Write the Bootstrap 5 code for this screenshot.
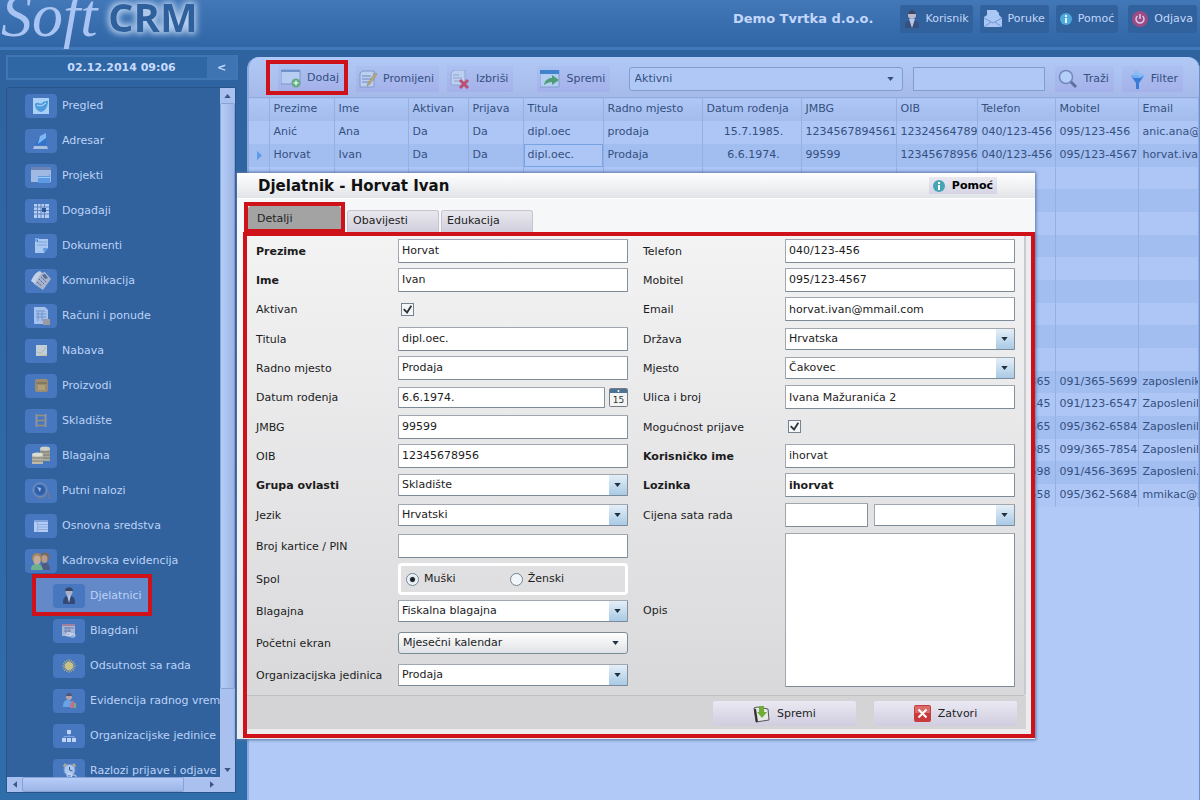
<!DOCTYPE html>
<html lang="hr">
<head>
<meta charset="utf-8">
<meta name="viewport" content="width=device-width, initial-scale=1">
<title>SoftCRM - Djelatnici</title>
<link href="https://cdn.jsdelivr.net/npm/bootstrap@5.3.0/dist/css/bootstrap.min.css" rel="stylesheet">
<style>
:root{--red:#cf1219;--ink:#34507f;--line:#8fabdb}
body{font-family:"DejaVu Sans",sans-serif;font-size:11px;line-height:14px;color:#1c1c1c;height:100vh;overflow:hidden;background:linear-gradient(#2e629f,#2f6eab)}
/* header */
.topbar{height:50px;background:linear-gradient(#4277b8,#3066a5);border-bottom:3px solid #4279ba}
.brand{display:block;overflow:visible}
.company{font-size:13px;color:#c3d7fb;margin-right:26px}
.top-btn{height:28px;background:#31629d;border:0;border-radius:3px;color:#c3d7fb;padding:0 4px;gap:6px;font-size:11px;margin-right:7px}
.top-btn:nth-last-child(2){margin-right:10px}
.top-btn:last-child{margin-right:3px}
/* sidebar */
.side{width:232px;margin-left:6px;padding:5px 0 7px;gap:7px}
.datebar{height:25px;border:2px solid #4076b4;background:#2f66a4;color:#c8dbfc}
.fold{width:29px;background:#3f74b3;border:0;color:#c8dbfc;font-weight:bold;font-size:11px}
.tree{background:#31629d;border:1px solid #28548a;border-radius:3px 0 0 0;margin-right:2px}
.tree li{height:35px;padding-left:18px}
.tree li.sub{padding-left:46px}
.tree a{color:#bcd2f9;text-decoration:none;gap:5px;white-space:nowrap}
.ico{width:32px;height:24px;border-radius:4px;background:#4677bf;display:flex;align-items:center;justify-content:center;flex:none}
.tree li.picked{position:relative}
.tree li.picked::before{content:"";position:absolute;left:25px;top:-4px;width:120px;height:42px;background:#6389c8;border:4px solid var(--red)}
.tree li.picked a{position:relative}
.sbar{background:#aac1f0}
.sbar-v{width:15px}
.sbar-h{height:15px}
.grip{background:linear-gradient(90deg,#b6cdf8,#9db5e6);border:1px solid #86a2d6;border-radius:2px}
.sbar-h .grip{background:linear-gradient(#b6cdf8,#9db5e6)}
.arr{width:15px;height:15px;display:flex;align-items:center;justify-content:center}
/* work area */
.work{margin:7px 0 0 9px;background:#b1c9f6;border-left:2px solid #8daadd;border-radius:12px 12px 0 0;border-right:1px solid #6b8fce}
.tools{height:40px;padding:4px 0 0 17px;background:linear-gradient(#b1c9f6,#a6bae9);border-radius:12px 12px 0 0}
.mark-red{border:4px solid var(--red);height:35px;margin-bottom:4px;padding-top:2px}
.tool{height:26px;border:0;background:linear-gradient(#abc0f0,#a5b1ea);color:var(--ink);padding:0 5px 0 3px;gap:6px;font-size:11px;display:flex;align-items:center;white-space:nowrap}
.tools .form-select,.tools .form-control{height:24px;border:1px solid #7f9dcd;background-color:#b0c8f6;color:var(--ink);font-size:11px;padding:0 5px;border-radius:3px}
.tools .form-control{border-radius:0;width:132px}
.tools .form-select{width:274px;background-image:url("data:image/svg+xml,%3Csvg xmlns='http://www.w3.org/2000/svg' viewBox='0 0 8 5'%3E%3Cpath d='M0 0h8L4 5z' fill='%2334507f'/%3E%3C/svg%3E");background-size:7px 4px;background-position:right 8px center}
.grid{table-layout:fixed;width:100%;color:var(--ink);border-top:1px solid var(--line)}
.grid th{font-weight:normal;height:23px;background:linear-gradient(#afc7f5,#a2bbec)}
.grid th,.grid td{padding:0 0 0 4px;border-right:1px solid #94afe0;white-space:nowrap;overflow:hidden}
.grid tbody tr{height:23px;background:#adc6f5}
.grid tbody tr:nth-child(3n){height:22px}
.grid tbody tr:nth-child(even){background:#a2bdf0}
.grid td.cell-on{box-shadow:inset 0 0 0 1px #76a3e4;background:#adc6f5}
/* dialog */
.dlg{position:absolute;left:237px;right:165px;top:173px;background:linear-gradient(#f7f8f9,#f4f4f5 40%,#ececee);box-shadow:0 0 3px 1px #5b76a4}
.dlg-head{height:26px;background:linear-gradient(#fff,#e1e4e7);border-bottom:1px solid #fff;padding-left:21px}
.dlg-head h1{font-size:15px;font-weight:bold;color:#111;line-height:20px}
.help{height:17px;border:0;background:linear-gradient(#eae9f0,#d6d3e4);font-weight:bold;font-size:11px;gap:7px;padding:0 4px;margin-right:38px}
.tabs{padding-left:7px;height:34px;margin-bottom:-1px;gap:2px}
.tabs button{width:92px;height:23px;border:1px solid #c6c5cf;border-bottom:0;border-radius:3px 3px 0 0;background:linear-gradient(#e9e8ee,#cfcddb);font-size:11px;text-align:left;padding:0 5px 3px;color:#222}
.tabs .tab-mark{width:101px;height:31px;border:4px solid var(--red)}
.tabs .tab-mark button{width:100%;height:23px;background:#a3a3a3;border:0;padding:2px 9px 0}
.frm{position:relative;border:4px solid var(--red);margin:-1px 0 1px 6px;padding-right:5px;padding-bottom:5px;background:#ececee}
.frm-body{background:linear-gradient(#f3f3f4,#d9d9db);border-right:2px solid #c9cacf;border-bottom:1px solid #bfc0c6;border-radius:0 0 3px 0;padding:0 9px 4px 9px;column-gap:15px}
.line{height:29px;display:grid;grid-template-columns:142px minmax(0,1fr);align-items:center}
.line:nth-child(3n){height:30px}
.line:nth-child(10){height:29px}
.line.first-wide{height:34px}
.line.wide{height:32px}
.line.opis{height:162px}
.line>label,.line>span{padding-top:2px}
.frm .form-control,.frm .form-select{height:24px;border:1px solid #a0a7af;border-right-color:#83919c;border-bottom-color:#7b8b97;border-radius:1px;padding:0 3px;font-size:11px;line-height:14px;color:#1c1c1c;background-color:#fff}
.frm .form-select{height:22px;background-image:url("data:image/svg+xml,%3Csvg xmlns='http://www.w3.org/2000/svg' viewBox='0 0 8 5'%3E%3Cpath d='M0 0h8L4 5z' fill='%2322313f'/%3E%3C/svg%3E"),linear-gradient(#e4eff8,#a9cae5);background-size:7px 4px,18px 100%;background-position:right 6px center,right center;background-repeat:no-repeat}
.frm .form-select.flat{border-radius:3px;padding-left:4px;border-color:#7b8b97;background-image:url("data:image/svg+xml,%3Csvg xmlns='http://www.w3.org/2000/svg' viewBox='0 0 8 5'%3E%3Cpath d='M0 0h8L4 5z' fill='%2322313f'/%3E%3C/svg%3E"),linear-gradient(#fff,#dfe2e5);background-size:7px 4px,100% 100%;background-position:right 8px center,center}
.frm textarea.form-control{height:154px;resize:none}
.frm .day{height:21px}
.cal{width:19px;height:20px;border:0;background:none;padding:0}
.frm .form-check-input{margin:0 0 0 3px;width:13px;height:13px;border:1px solid #76838f;border-radius:0;background-color:#f4f7f9}
.frm .form-check-input[type=checkbox]:checked{background-image:url("data:image/svg+xml,%3Csvg xmlns='http://www.w3.org/2000/svg' viewBox='0 0 13 13'%3E%3Cpath d='M2 6l4 4L11 2' fill='none' stroke='%23333' stroke-width='2.200'/%3E%3C/svg%3E");background-size:100%}
.frm .form-check-input[type=radio]{border-radius:50%;margin:0;background-color:#f1f6fa}
.frm .form-check-input[type=radio]:checked{background-image:radial-gradient(#222 0 2px,#d9e6f0 3px,#f1f6fa 5px)}
.radios{height:32px;border:3px solid #fff;border-radius:4px;padding-left:5px;gap:54px}
.radios label{gap:5px}
.rate{gap:6px}
.foot{background:#d4d4d6;height:33px;padding:5px 9px 0 0;gap:18px}
.act{width:143px;height:25px;border:0;border-radius:2px;background:linear-gradient(#eae9f2,#d0cde0);font-size:11px;gap:7px;color:#222}
</style>
</head>
<body class="d-flex flex-column">
<header class="topbar d-flex flex-none align-items-start">
  <a href="#" class="flex-shrink-0" aria-label="SoftCRM"><svg class="brand" width="200" height="47" viewBox="0 0 200 47">
    <defs><filter id="glow" x="-20%" y="-50%" width="140%" height="200%"><feMorphology operator="dilate" radius="2"/><feGaussianBlur stdDeviation="3"/><feComponentTransfer result="g"><feFuncR type="linear" slope="0" intercept=".46"/><feFuncG type="linear" slope="0" intercept=".62"/><feFuncB type="linear" slope="0" intercept=".86"/></feComponentTransfer><feMerge><feMergeNode in="g"/><feMergeNode in="SourceGraphic"/></feMerge></filter></defs>
    <text x="108" y="32" font-family="Open Sans,sans-serif" font-weight="bold" font-size="40" fill="#2f609e" filter="url(#glow)">CRM</text>
    <text x="1" y="36" font-family="Liberation Serif,serif" font-style="italic" font-size="62" fill="#a9c4f2">Soft</text>
  </svg></a>
  <div class="d-flex align-items-center ms-auto" style="padding-top:5px">
    <strong class="company">Demo Tvrtka d.o.o.</strong>
    <button class="top-btn d-flex align-items-center"><svg width="16" height="19" viewBox="0 0 16 19"><path d="M1 18c0-6 2-8 7-8s7 2 7 8z" fill="#3a4f7d"/><path d="M5 9l3 9 3-9z" fill="#b6c6e8"/><circle cx="8" cy="5" r="4" fill="#b8b9cf"/><path d="M4 4c0-5 8-5 8 0z" fill="#3a4665"/></svg>Korisnik</button>
    <button class="top-btn d-flex align-items-center"><svg width="18" height="18" viewBox="0 0 18 18"><path d="M0 7l3-2V0h9l3 3v2l3 3v9H0z" fill="#a9c6f4"/><path d="M0 8l9 5 9-5M0 17l7-5M18 17l-7-5" stroke="#6f95d2" fill="none"/></svg>Poruke</button>
    <button class="top-btn d-flex align-items-center"><svg width="12" height="12" viewBox="0 0 12 12"><circle cx="6" cy="6" r="6" fill="#4fa9dc"/><path d="M6 2v2M6 5v5" stroke="#e5f3ff" stroke-width="2"/></svg>Pomoć</button>
    <button class="top-btn d-flex align-items-center"><svg width="16" height="16" viewBox="0 0 16 16"><circle cx="8" cy="8" r="8" fill="#9c4a83"/><path d="M5.500 5a4 4 0 1 0 5 0M8 3v5" stroke="#d6cdec" stroke-width="1.500" fill="none"/></svg>Odjava</button>
  </div>
</header>

<main class="d-flex flex-grow-1" style="min-height:0">
  <aside class="side d-flex flex-column flex-shrink-0">
    <div class="datebar d-flex flex-shrink-0">
      <strong class="flex-grow-1 text-center align-self-center ps-4 ms-1">02.12.2014 09:06</strong>
      <button class="fold" aria-label="Sakrij izbornik">&lt;</button>
    </div>
    <nav class="tree d-flex flex-column flex-grow-1" style="min-height:0">
      <div class="d-flex flex-grow-1" style="min-height:0">
        <ul class="list-unstyled mb-0 flex-grow-1 overflow-hidden">
          <li class="d-flex align-items-center"><a href="#" class="d-flex align-items-center"><span class="ico"><svg width="16" height="16" viewBox="0 0 16 16"><path fill="#a9d0f6" d="M0 0h16v16H0z"/><path d="M2 6c3-3 5 1 7-1s4-2 6-2c0 6-3 10-7 11-4-1-6-4-6-8z" fill="#4d9bdc"/><path d="M4 7c4 2 6 0 9-2" stroke="#c7e6ff" fill="none"/></svg></span>Pregled</a></li>
          <li class="d-flex align-items-center"><a href="#" class="d-flex align-items-center"><span class="ico"><svg width="16" height="18" viewBox="0 0 16 18"><path d="M2 13L7 4l6-3v12z" fill="#2f74cf"/><path d="M7 4l6-3v5l-8 6z" fill="#7fb6f0"/><path d="M1 14h13l1 3H0z" fill="#a7bfe3"/></svg></span>Adresar</a></li>
          <li class="d-flex align-items-center"><a href="#" class="d-flex align-items-center"><span class="ico"><svg width="20" height="17" viewBox="0 0 20 17"><path d="M0 0h20v15H0z" fill="#9fb9e2"/><path d="M0 0h20v3H0z" fill="#6b83b4"/><path d="M7 9h11l1-2v9H7z" fill="#5d9ae4"/><path d="M7 10h12v1H7z" fill="#9ccaf8"/></svg></span>Projekti</a></li>
          <li class="d-flex align-items-center"><a href="#" class="d-flex align-items-center"><span class="ico"><svg width="15" height="14" viewBox="0 0 15 14"><path fill="#b3cdf4" d="M0 0h15v14H0z"/><path d="M0 3h15M0 6.500h15M0 10h15M3.500 0v14M7 0v14M10.500 0v14" stroke="#5c83be"/><path d="M8 4h4v4H8z" fill="#2c5695"/></svg></span>Događaji</a></li>
          <li class="d-flex align-items-center"><a href="#" class="d-flex align-items-center"><span class="ico"><svg width="15" height="17" viewBox="0 0 15 17"><path d="M1 1h4v2H3v3H1z" fill="#77a9e8"/><path d="M1 5h3V2h10v9l-4 5H1z" fill="#a8c7f1"/><path d="M14 11l-4 5-1-5z" fill="#5d9de0"/><path d="M4 5h9M3 8h10" stroke="#7fa4da"/></svg></span>Dokumenti</a></li>
          <li class="d-flex align-items-center"><a href="#" class="d-flex align-items-center"><span class="ico"><svg width="20" height="19" viewBox="0 0 20 19"><path d="M6 3l8-2 6 7-8 11-9-6z" fill="#a7b3cc"/><path d="M0 10C2 5 5 1 9 0l2 2C8 5 6 8 4 13z" fill="#c3d0e8"/><path d="M11 4l3-1 3 4-3 1z" fill="#576b90"/><path d="M8 8l5 5M10 6l5 5M6 11l5 4" stroke="#4f6592" stroke-dasharray="2 1"/></svg></span>Komunikacija</a></li>
          <li class="d-flex align-items-center"><a href="#" class="d-flex align-items-center"><span class="ico"><svg width="17" height="18" viewBox="0 0 17 18"><path d="M1 0h11l3 3v14H1z" fill="#a5c1ee"/><path d="M3 4h9M3 7h10M3 10h10M5 5v9M9 5v9" stroke="#7192c8"/><path d="M10 12h7v6h-7z" fill="#9a9aa2"/></svg></span>Računi i ponude</a></li>
          <li class="d-flex align-items-center"><a href="#" class="d-flex align-items-center"><span class="ico"><svg width="11" height="11" viewBox="0 0 11 11"><path fill="#c3cfd8" d="M0 0h11v11H0z"/><path d="M1 7c4 2 6 0 9-5" stroke="#a9bba8" fill="none"/><path d="M0 11h11V9z" fill="#c8c09e"/></svg></span>Nabava</a></li>
          <li class="d-flex align-items-center"><a href="#" class="d-flex align-items-center"><span class="ico"><svg width="13" height="13" viewBox="0 0 13 13"><rect width="13" height="13" rx="2" fill="#9a8b72"/><path d="M1 4h11" stroke="#6e6457"/><path d="M3 6h7v5H3z" fill="#b09e78"/></svg></span>Proizvodi</a></li>
          <li class="d-flex align-items-center"><a href="#" class="d-flex align-items-center"><span class="ico"><svg width="12" height="13" viewBox="0 0 12 13"><path d="M1.500 0v13M10.500 0v13" stroke="#8b94ab" stroke-width="2"/><path d="M1 1.500h10M1 6.500h10M1 11.500h10" stroke="#97907e" stroke-width="1.500"/></svg></span>Skladište</a></li>
          <li class="d-flex align-items-center"><a href="#" class="d-flex align-items-center"><span class="ico"><svg width="20" height="19" viewBox="0 0 20 19"><path d="M9 2h10v13H9z" fill="#aaa99b"/><ellipse cx="14" cy="2.500" rx="5" ry="2" fill="#cfd0c8"/><path d="M9 6h10M9 9h10M9 12h10" stroke="#77786f"/><path d="M1 8h11v10H1z" fill="#bbb9a9"/><ellipse cx="6.500" cy="8.500" rx="5.500" ry="2" fill="#dcdcd2"/><path d="M1 12h11M1 15h11" stroke="#7d7c70"/></svg></span>Blagajna</a></li>
          <li class="d-flex align-items-center"><a href="#" class="d-flex align-items-center"><span class="ico"><svg width="19" height="18" viewBox="0 0 19 18"><circle cx="8" cy="8" r="7" fill="none" stroke="#8094bb"/><circle cx="8" cy="8" r="5" fill="#2f5ea4"/><path d="M5 5l4 1-1 4z" fill="#a2bbe4"/><path d="M4 15c6 3 11 0 12-6l2 8" fill="none" stroke="#66799f" stroke-width="1.500"/></svg></span>Putni nalozi</a></li>
          <li class="d-flex align-items-center"><a href="#" class="d-flex align-items-center"><span class="ico"><svg width="14" height="12" viewBox="0 0 14 12"><path fill="#b2ccf4" d="M0 0h14v12H0z"/><path d="M0 1h14" stroke="#80a4dd" stroke-width="2"/><path d="M3.500 2v10M3 4.500h11M3 7h11M3 9.500h11" stroke="#8eafe3"/></svg></span>Osnovna sredstva</a></li>
          <li class="d-flex align-items-center"><a href="#" class="d-flex align-items-center"><span class="ico"><svg width="20" height="18" viewBox="0 0 20 18"><path d="M10 18c0-6 2-8 4-8s5 2 5 8z" fill="#4d5c86"/><circle cx="14" cy="5" r="4.500" fill="#7c6a60"/><ellipse cx="13.500" cy="7" rx="3" ry="4" fill="#b79c8c"/><path d="M0 18c0-5 2-6 6-6s5 2 6 6z" fill="#6fb08f"/><circle cx="6" cy="6" r="5" fill="#a3855f"/><ellipse cx="6" cy="8" rx="3.500" ry="4.500" fill="#c2aa9a"/></svg></span>Kadrovska evidencija</a></li>
          <li class="sub picked d-flex align-items-center"><a href="#" class="d-flex align-items-center"><span class="ico"><svg width="14" height="17" viewBox="0 0 14 17"><path d="M1 17C1 11 2 9 7 9s6 2 6 8z" fill="#344975"/><path d="M5 8l2 8 2-8z" fill="#b6c6e8"/><circle cx="7" cy="5" r="3.500" fill="#aab0c8"/><path d="M3 4c0-5 8-5 8 0z" fill="#3a4665"/></svg></span>Djelatnici</a></li>
          <li class="sub d-flex align-items-center"><a href="#" class="d-flex align-items-center"><span class="ico"><svg width="14" height="14" viewBox="0 0 14 14"><path fill="#a5b5d6" d="M0 0h13v12H0z"/><path d="M0 1h13" stroke="#a2809b" stroke-width="2"/><path d="M2 4h10M2 7h7M4 3v7M7 3v5" stroke="#6880b1"/><rect x="4" y="9" width="5" height="3" rx="1.500" fill="none" stroke="#d6e2f6"/><rect x="8" y="10" width="5" height="3" rx="1.500" fill="none" stroke="#d6e2f6"/></svg></span>Blagdani</a></li>
          <li class="sub d-flex align-items-center"><a href="#" class="d-flex align-items-center"><span class="ico"><svg width="14" height="14" viewBox="0 0 14 14"><path d="M7 0v14M0 7h14M2 2l10 10M12 2L2 12M4.500 1l5 12M9.500 1l-5 12M1 4.500l12 5M1 9.500l12-5" stroke="#b2ad7d"/><circle cx="7" cy="7" r="4" fill="#c9c389"/></svg></span>Odsutnost sa rada</a></li>
          <li class="sub d-flex align-items-center"><a href="#" class="d-flex align-items-center"><span class="ico"><svg width="15" height="15" viewBox="0 0 15 15"><path d="M1 14c0-6 2-7 5-7s5 2 5 7z" fill="#6aa2e4"/><circle cx="7" cy="4" r="3" fill="#b5a2a4"/><path d="M4 3c0-4 6-4 6 0z" fill="#4f5674"/><path d="M8 10h2v5H8z" fill="#b3789c"/><path d="M10 8h2v7h-2z" fill="#c86d7e"/><path d="M12 10h2v5h-2z" fill="#75ae85"/></svg></span>Evidencija radnog vremena</a></li>
          <li class="sub d-flex align-items-center"><a href="#" class="d-flex align-items-center"><span class="ico"><svg width="14" height="14" viewBox="0 0 14 14"><path d="M5 1h4v4H5zM0 9h4v4H0zM5 9h4v4H5zM10 9h4v4h-4z" fill="#bcd3f7"/><path d="M7 5v3M2 9V7.500h10V9" stroke="#7ea3de" fill="none"/></svg></span>Organizacijske jedinice</a></li>
          <li class="sub d-flex align-items-center"><a href="#" class="d-flex align-items-center"><span class="ico"><svg width="15" height="15" viewBox="0 0 15 15"><path d="M2 4l2-3M13 4l-2-3" stroke="#b8a88e" stroke-width="3"/><circle cx="7.500" cy="7" r="5.500" fill="#abc7f0" stroke="#7b9bd0"/><path d="M7.500 4v3l3 1" stroke="#35568e" fill="none"/><rect x="5" y="11" width="5" height="3" rx="1.500" fill="none" stroke="#d6e2f6"/><rect x="9" y="12" width="5" height="3" rx="1.500" fill="none" stroke="#d6e2f6"/></svg></span>Razlozi prijave i odjave</a></li>
        </ul>
        <div class="sbar sbar-v d-flex flex-column flex-shrink-0 align-items-stretch">
          <span class="arr"><svg width="7" height="4" viewBox="0 0 8 5"><path d="M0 5h8L4 0z" fill="#3c5688"/></svg></span>
          <div class="grip" style="flex:0 0 85%"></div>
          <span class="arr mt-auto"><svg width="7" height="4" viewBox="0 0 8 5"><path d="M0 0h8L4 5z" fill="#3c5688"/></svg></span>
        </div>
      </div>
      <div class="sbar sbar-h d-flex flex-shrink-0">
        <span class="arr"><svg width="4" height="7" viewBox="0 0 5 8"><path d="M5 0v8L0 4z" fill="#3c5688"/></svg></span>
        <div class="grip" style="flex:0 0 71%"></div>
        <span class="arr ms-auto me-3"><svg width="4" height="7" viewBox="0 0 5 8"><path d="M0 0v8l5-4z" fill="#3c5688"/></svg></span>
      </div>
    </nav>
  </aside>

  <section class="work flex-grow-1 overflow-hidden">
    <div class="tools d-flex align-items-center">
      <div class="mark-red d-flex align-items-center ps-2 me-2"><button class="tool"><svg width="20" height="19" viewBox="0 0 20 19"><path d="M0 1h19v14H0z" fill="#b7cdf2" stroke="#7c98cb"/><path d="M0 1h19v2H0z" fill="#6f90cb"/><circle cx="15" cy="14" r="4.500" fill="#63a884"/><path d="M15 11.500v5M12.500 14h5" stroke="#d9f3e1" stroke-width="1.500"/></svg>Dodaj</button></div>
      <button class="tool me-2"><svg width="18" height="19" viewBox="0 0 18 19"><path d="M1 3l3-2h11v16H1z" fill="#bccff1" stroke="#8199c8"/><path d="M3 6h9M3 9h9M3 12h8" stroke="#6e8ac0"/><path d="M16 3L9 13l-1 3 3-2 7-10z" fill="#c0ae70" stroke="#807a6c" stroke-width=".5"/></svg>Promijeni</button>
      <button class="tool me-4"><svg width="20" height="19" viewBox="0 0 20 19"><path d="M1 3l3-3h11v15H1z" fill="#bccff1" stroke="#8ea5d2"/><path d="M3 5h6M3 8h9M4 11h6" stroke="#8ea5d2"/><path d="M10 10l8 8M18 10l-8 8" stroke="#bb4f73" stroke-width="3"/></svg>Izbriši</button>
      <button class="tool"><svg width="20" height="18" viewBox="0 0 20 18"><path d="M0 0h19v17H0z" fill="#b4cdf2" stroke="#7f9ccf"/><path d="M0 0h19v4H0z" fill="#3f83cf"/><path d="M4 15c1-5 4-7 8-7V5l7 5-7 5v-3c-3 0-5 1-8 3z" fill="#4d9e76"/></svg>Spremi</button>
      <select class="form-select ms-auto" aria-label="Prikaz"><option>Aktivni</option></select>
      <input type="text" class="form-control flex-shrink-0" style="margin:0 10px" aria-label="Pojam za traženje">
      <button class="tool me-2"><svg width="20" height="20" viewBox="0 0 20 20"><path d="M12 12l6 6" stroke="#5e6f9d" stroke-width="3"/><circle cx="8" cy="8" r="6.500" fill="#b4d0fa" stroke="#7488bd" stroke-width="1.500"/></svg>Traži</button>
      <button class="tool me-3 ps-2"><svg width="15" height="19" viewBox="0 0 15 19"><path d="M1 6h13l-5 7v6H6v-6z" fill="#397cd8"/><ellipse cx="7.500" cy="6" rx="6.500" ry="2" fill="#77aef0"/><path d="M4 1h4v4H4zM8 3h4v3H8z" fill="#89bdf5"/></svg>Filter</button>
    </div>
    <table class="grid">
      <colgroup><col style="width:20px"><col style="width:65px"><col style="width:74px"><col style="width:60px"><col style="width:55px"><col style="width:80px"><col style="width:99px"><col style="width:99px"><col style="width:95px"><col style="width:81px"><col style="width:78px"><col style="width:83px"><col></colgroup>
      <thead><tr><th></th><th>Prezime</th><th>Ime</th><th>Aktivan</th><th>Prijava</th><th>Titula</th><th>Radno mjesto</th><th>Datum rođenja</th><th>JMBG</th><th>OIB</th><th>Telefon</th><th>Mobitel</th><th>Email</th></tr></thead>
      <tbody>
        <tr><td></td><td>Anić</td><td>Ana</td><td>Da</td><td>Da</td><td>dipl.oec</td><td>prodaja</td><td class="text-center">15.7.1985.</td><td>1234567894561</td><td>12324564789</td><td>040/123-456</td><td>095/123-456</td><td>anic.ana@</td></tr>
        <tr><td class="ps-2"><svg width="5" height="9" viewBox="0 0 5 9"><path d="M0 0v9l5-4.500z" fill="#5c9bea"/></svg></td><td>Horvat</td><td>Ivan</td><td>Da</td><td>Da</td><td class="cell-on">dipl.oec.</td><td>Prodaja</td><td class="text-center">6.6.1974.</td><td>99599</td><td>12345678956</td><td>040/123-456</td><td>095/123-4567</td><td>horvat.ivan</td></tr>
        <tr><td><td><td><td><td><td><td><td><td><td><td><td><td></tr>
        <tr><td><td><td><td><td><td><td><td><td><td><td><td><td></tr>
        <tr><td><td><td><td><td><td><td><td><td><td><td><td><td></tr>
        <tr><td><td><td><td><td><td><td><td><td><td><td><td><td></tr>
        <tr><td><td><td><td><td><td><td><td><td><td><td><td><td></tr>
        <tr><td><td><td><td><td><td><td><td><td><td><td><td><td></tr>
        <tr><td><td><td><td><td><td><td><td><td><td><td><td><td></tr>
        <tr><td><td><td><td><td><td><td><td><td><td><td><td><td></tr>
        <tr><td><td><td><td><td><td><td><td><td><td><td><td><td></tr>
        <tr><td><td><td><td><td><td><td><td><td><td><td class="text-end pe-1">365</td><td>091/365-5699</td><td>zaposlenik</td></tr>
        <tr><td><td><td><td><td><td><td><td><td><td><td class="text-end pe-1">145</td><td>091/123-6547</td><td>Zaposlenik</td></tr>
        <tr><td><td><td><td><td><td><td><td><td><td><td class="text-end pe-1">565</td><td>095/362-6584</td><td>Zaposlenik</td></tr>
        <tr><td><td><td><td><td><td><td><td><td><td><td class="text-end pe-1">985</td><td>099/365-7854</td><td>Zaposlenik</td></tr>
        <tr><td><td><td><td><td><td><td><td><td><td><td class="text-end pe-1">698</td><td>091/456-3695</td><td>Zaposleni.</td></tr>
        <tr><td><td><td><td><td><td><td><td><td><td><td class="text-end pe-1">658</td><td>095/362-5684</td><td>mmikac@s</td></tr>
      </tbody>
    </table>
  </section>
</main>

<div class="dlg" role="dialog" aria-labelledby="dlgTitle">
  <div class="dlg-head d-flex align-items-center justify-content-between">
    <h1 id="dlgTitle" class="m-0">Djelatnik - Horvat Ivan</h1>
    <button class="help d-flex align-items-center"><svg width="12" height="12" viewBox="0 0 12 12"><circle cx="6" cy="6" r="6" fill="#45a5b5"/><path d="M6 2v2M6 5v5" stroke="#fff" stroke-width="2"/></svg>Pomoć</button>
  </div>
  <div class="tabs d-flex align-items-end" role="tablist">
    <div class="tab-mark"><button role="tab" aria-selected="true">Detalji</button></div>
    <button role="tab">Obavijesti</button>
    <button role="tab">Edukacija</button>
  </div>
  <form class="frm">
    <div class="frm-body d-flex">
      <div class="flex-fill" style="width:50%">
        <div class="line"><label for="prezime" class="fw-bold">Prezime</label><input id="prezime" class="form-control" value="Horvat"></div>
        <div class="line"><label for="ime" class="fw-bold">Ime</label><input id="ime" class="form-control" value="Ivan"></div>
        <div class="line"><label for="aktivan">Aktivan</label><input id="aktivan" type="checkbox" class="form-check-input" checked></div>
        <div class="line"><label for="titula">Titula</label><input id="titula" class="form-control" value="dipl.oec."></div>
        <div class="line"><label for="radno">Radno mjesto</label><input id="radno" class="form-control" value="Prodaja"></div>
        <div class="line"><label for="datum">Datum rođenja</label><div class="d-flex align-items-center"><input id="datum" class="form-control day" value="6.6.1974."><button type="button" class="cal flex-shrink-0 ms-1" aria-label="Kalendar"><svg width="19" height="19" viewBox="0 0 19 19"><rect x=".5" y=".5" width="18" height="18" rx="1" fill="#f4f4f4" stroke="#747b84"/><path d="M1 1h17v4H1z" fill="#4c7396"/><circle cx="9.500" cy="3" r="1" fill="#fff"/><text x="9.500" y="15" font-size="9" text-anchor="middle" fill="#333">15</text></svg></button></div></div>
        <div class="line"><label for="jmbg">JMBG</label><input id="jmbg" class="form-control" value="99599"></div>
        <div class="line"><label for="oib">OIB</label><input id="oib" class="form-control" value="12345678956"></div>
        <div class="line"><label for="grupa" class="fw-bold">Grupa ovlasti</label><select id="grupa" class="form-select"><option>Skladište</option></select></div>
        <div class="line"><label for="jezik">Jezik</label><select id="jezik" class="form-select"><option>Hrvatski</option></select></div>
        <div class="line first-wide"><label for="pin">Broj kartice / PIN</label><input id="pin" class="form-control"></div>
        <div class="line wide"><span id="spol">Spol</span><div class="radios d-flex align-items-center" role="radiogroup" aria-labelledby="spol"><label class="d-flex align-items-center"><input type="radio" name="spol" class="form-check-input" checked>Muški</label><label class="d-flex align-items-center"><input type="radio" name="spol" class="form-check-input">Ženski</label></div></div>
        <div class="line wide"><label for="blag">Blagajna</label><select id="blag" class="form-select"><option>Fiskalna blagajna</option></select></div>
        <div class="line wide"><label for="ekran">Početni ekran</label><select id="ekran" class="form-select flat"><option>Mjesečni kalendar</option></select></div>
        <div class="line wide"><label for="org">Organizacijska jedinica</label><select id="org" class="form-select"><option>Prodaja</option></select></div>
      </div>
      <div class="flex-fill" style="width:50%">
        <div class="line"><label for="tel">Telefon</label><input id="tel" class="form-control" value="040/123-456"></div>
        <div class="line"><label for="mob">Mobitel</label><input id="mob" class="form-control" value="095/123-4567"></div>
        <div class="line"><label for="mail">Email</label><input id="mail" class="form-control" value="horvat.ivan@mmail.com"></div>
        <div class="line"><label for="drzava">Država</label><select id="drzava" class="form-select"><option>Hrvatska</option></select></div>
        <div class="line"><label for="mjesto">Mjesto</label><select id="mjesto" class="form-select"><option>Čakovec</option></select></div>
        <div class="line"><label for="ulica">Ulica i broj</label><input id="ulica" class="form-control" value="Ivana Mažuranića 2"></div>
        <div class="line"><label for="prijava">Mogućnost prijave</label><input id="prijava" type="checkbox" class="form-check-input" checked></div>
        <div class="line"><label for="korime" class="fw-bold">Korisničko ime</label><input id="korime" class="form-control" value="ihorvat"></div>
        <div class="line"><label for="loz" class="fw-bold">Lozinka</label><input id="loz" class="form-control fw-bold" value="ihorvat"></div>
        <div class="line"><label for="cijena">Cijena sata rada</label><div class="d-flex align-items-center rate"><input id="cijena" class="form-control flex-shrink-0" style="width:36%"><select class="form-select" aria-label="Valuta"><option></option></select></div></div>
        <div class="line opis"><label for="opis">Opis</label><textarea id="opis" class="form-control"></textarea></div>
      </div>
    </div>
    <div class="foot d-flex justify-content-end">
      <button type="button" class="act d-flex align-items-center justify-content-center"><svg width="17" height="18" viewBox="0 0 17 18"><path d="M1 3l3-1 11 2 1 11-13 2z" fill="#e8e8e8" stroke="#555"/><path d="M2 4l2 13" stroke="#333" stroke-width="2"/><path d="M6 1h5v6h3l-5 6-5-6h2z" fill="#6fae35"/></svg>Spremi</button>
      <button type="button" class="act d-flex align-items-center justify-content-center"><svg width="17" height="17" viewBox="0 0 17 17"><rect width="17" height="17" rx="2" fill="#c93a3c"/><rect x="1" y="1" width="15" height="7" fill="#db6b68"/><path d="M4.500 4.500l8 8M12.500 4.500l-8 8" stroke="#fff" stroke-width="2"/></svg>Zatvori</button>
    </div>
  </form>
</div>
<script src="https://cdn.jsdelivr.net/npm/bootstrap@5.3.0/dist/js/bootstrap.bundle.min.js"></script>
</body>
</html>
